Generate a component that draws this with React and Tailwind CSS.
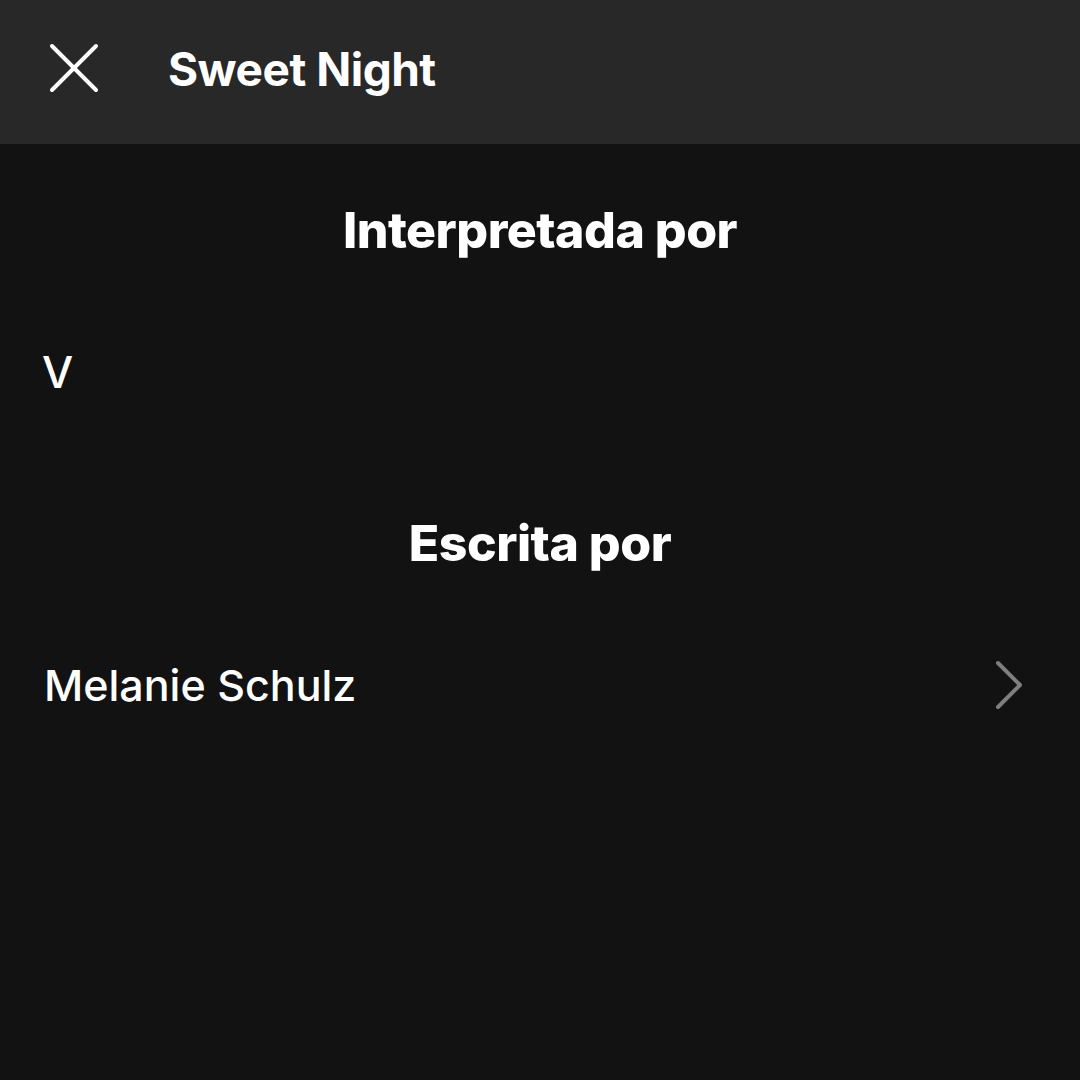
import React from 'react';

const CloseIcon = () => (
  <svg width="50" height="50" viewBox="0 0 50 50" fill="none" className="-mt-[8px]">
    <path d="M3 3L47 47M47 3L3 47" stroke="#ffffff" strokeWidth="4" strokeLinecap="round" />
  </svg>
);

const Chevron = () => (
  <svg width="32" height="52" viewBox="0 0 32 52" fill="none">
    <path d="M4 4L26 26L4 48" stroke="#7f7f7f" strokeWidth="4" strokeLinecap="round" strokeLinejoin="round" />
  </svg>
);

const App = () => {
  return (
    <div className="w-[1080px] h-[1080px] flex flex-col bg-[#121212] text-white font-[Inter,sans-serif]">
      {/* Header */}
      <div className="h-[144px] bg-[#282828] flex items-center pl-[49px]">
        <CloseIcon />
        <h1 className="ml-[69px] -mt-[5px] text-[46px] font-bold tracking-[-0.5px]">Sweet Night</h1>
      </div>

      {/* Performed by */}
      <div className="h-[172px] flex items-center justify-center">
        <h2 className="text-[50px] font-extrabold tracking-[-0.5px]">Interpretada por</h2>
      </div>
      <div className="h-[112px] flex items-center px-[42px]">
        <span className="text-[44px] font-medium">V</span>
      </div>

      {/* Written by */}
      <div className="h-[172px] mt-[29px] flex items-center justify-center">
        <h2 className="text-[50px] font-extrabold tracking-[-0.5px]">Escrita por</h2>
      </div>
      <div className="h-[112px] flex items-center justify-between pl-[44px] pr-[54px]">
        <span className="text-[43px] font-medium">Melanie Schulz</span>
        <Chevron />
      </div>
    </div>
  );
};

export default App;
